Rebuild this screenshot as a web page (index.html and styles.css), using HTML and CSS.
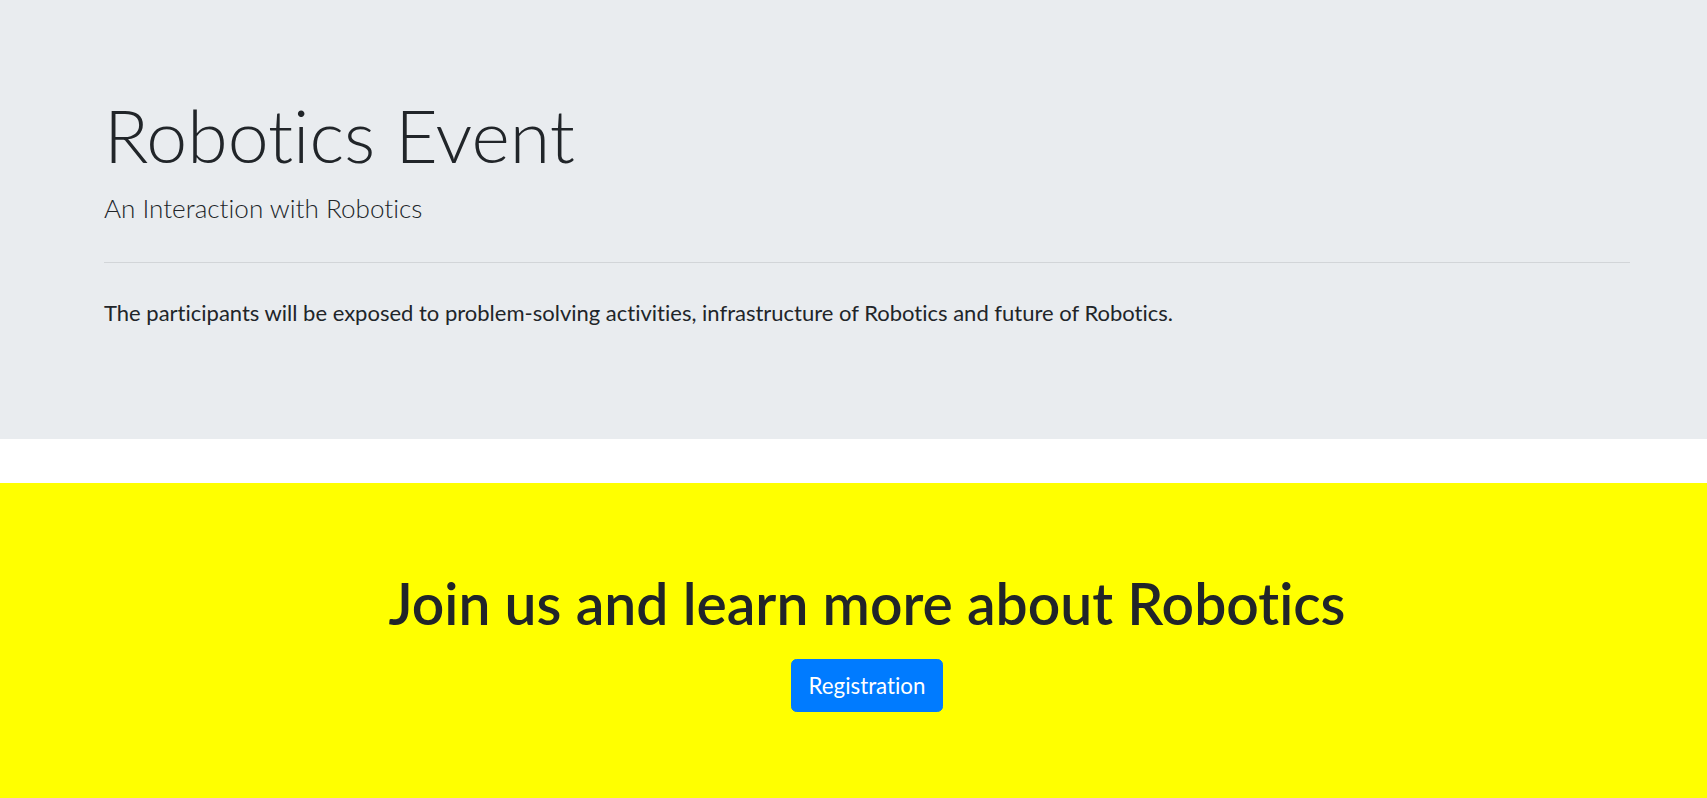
FILE: index.html
```html
<!DOCTYPE html>
<html lang="en">
<head>
<meta charset="utf-8">
<title>Robotics Event</title>
<link rel="stylesheet" href="styles.css">
</head>
<body>
  <section class="hero">
    <h1 class="hero-title">Robotics Event</h1>
    <p class="hero-lead">An Interaction with Robotics</p>
    <hr class="hero-rule">
    <p class="hero-text">The participants will be exposed to problem-solving activities, infrastructure of Robotics and future of Robotics.</p>
  </section>
  <section class="cta">
    <h1 class="cta-title">Join us and learn more about Robotics</h1>
    <a class="cta-button" href="#">Registration</a>
  </section>
</body>
</html>
```
FILE: styles.css
```css
html, body {
  margin: 0;
  padding: 0;
  background: #ffffff;
}

body {
  font-family: Lato, "Noto Sans", sans-serif;
  font-variant-ligatures: none;
  color: #212529;
}

.hero {
  background: #e9ecef;
  padding: 91px 77px 110px 104px;
  margin-bottom: 44px;
}

.hero-title {
  margin: 0;
  font-size: 73.4px;
  font-weight: 300;
  line-height: 88px;
}

.hero-lead {
  margin: 10px 0 0;
  font-size: 26.1px;
  font-weight: 300;
  line-height: 39px;
}

.hero-rule {
  margin: 34px 0 0;
  border: 0;
  border-top: 1px solid #d2d5d8;
  height: 0;
}

.hero-text {
  margin: 33px 0 0;
  font-size: 22px;
  font-weight: 400;
  line-height: 33px;
}

.cta {
  background: #ffff00;
  padding: 86px 77px 90px 104px;
  display: flex;
  flex-direction: column;
  align-items: center;
}

.cta-title {
  margin: 0;
  font-size: 57px;
  font-weight: 600;
  line-height: 68px;
  text-align: center;
}

.cta-button {
  margin-top: 22px;
  display: inline-block;
  box-sizing: border-box;
  height: 53px;
  line-height: 51px;
  padding: 0 16.5px;
  border: 1px solid #007bff;
  border-radius: 5.6px;
  background: #007bff;
  color: #ffffff;
  font-size: 22.3px;
  font-weight: 400;
  text-decoration: none;
}
```
